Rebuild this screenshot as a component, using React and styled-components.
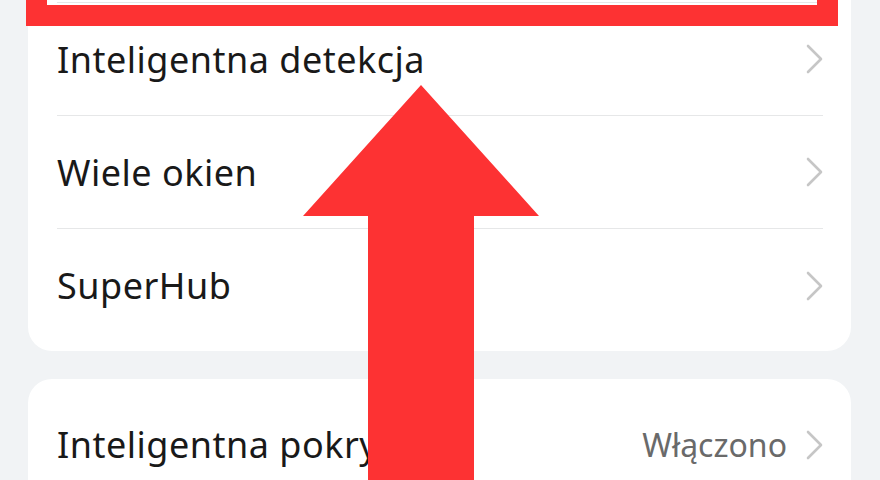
import React from "react"
import styled, { createGlobalStyle } from "styled-components"

const GlobalStyle = createGlobalStyle`
  html, body {
    margin: 0;
    padding: 0;
    background: #f1f3f5;
    overflow: hidden;
  }
  body {
    font-family: "Noto Sans", "Open Sans", sans-serif;
  }
`

const Screen = styled.div`
  position: relative;
  width: 880px;
  height: 480px;
  overflow: hidden;
`

const List = styled.div`
  display: flex;
  flex-direction: column;
  gap: 28px;
  margin-top: -119px;
  padding: 0 29px 0 28px;
`

const Card = styled.div`
  background: #ffffff;
  border-radius: 24px;
  padding: 9px 28px 9px 29px;
`

const Row = styled.div`
  position: relative;
  display: flex;
  align-items: center;
  height: 113px;
  border-bottom: ${(p) => (p.$last ? "none" : "1px solid #e6e7e8")};
  box-sizing: border-box;
`

const Label = styled.span`
  flex: 1;
  font-size: 36px;
  color: #191919;
  letter-spacing: 0.5px;
  white-space: nowrap;
`

const Value = styled.span`
  font-size: 32px;
  color: #6a6a6a;
  margin-right: 19px;
`

const Highlight = styled.div`
  position: absolute;
  left: -31px;
  right: -15px;
  top: -20px;
  bottom: -24px;
  border: 21px solid #fd3233;
  pointer-events: none;
`

const Arrow = styled.svg`
  position: absolute;
  left: 0;
  top: 0;
  pointer-events: none;
`

const Chevron = () => (
  <svg width="17" height="30" viewBox="0 0 17 30" fill="none">
    <path
      d="M2 2 L15 15 L2 28"
      stroke="#c6c6c6"
      strokeWidth="2.6"
      strokeLinecap="round"
      strokeLinejoin="round"
    />
  </svg>
)

const Item = ({ label, value, last, children }) => (
  <Row $last={last}>
    <Label>{label}</Label>
    {value && <Value>{value}</Value>}
    <Chevron />
    {children}
  </Row>
)

export default function App() {
  return (
    <Screen>
      <GlobalStyle />
      <List>
        <Card>
          {/* highlighted row, scrolled above the viewport */}
          <Item label="">
            <Highlight />
          </Item>
          <Item label="Inteligentna detekcja" />
          <Item label="Wiele okien" />
          <Item label="SuperHub" last />
        </Card>
        <Card>
          <Item label="Inteligentna pokrywa" value="Włączono" last />
        </Card>
      </List>
      <Arrow width="880" height="480" viewBox="0 0 880 480">
        <polygon
          points="421,85 539,216 474,216 474,490 368,490 368,216 303,216"
          fill="#fd3233"
        />
      </Arrow>
    </Screen>
  )
}
